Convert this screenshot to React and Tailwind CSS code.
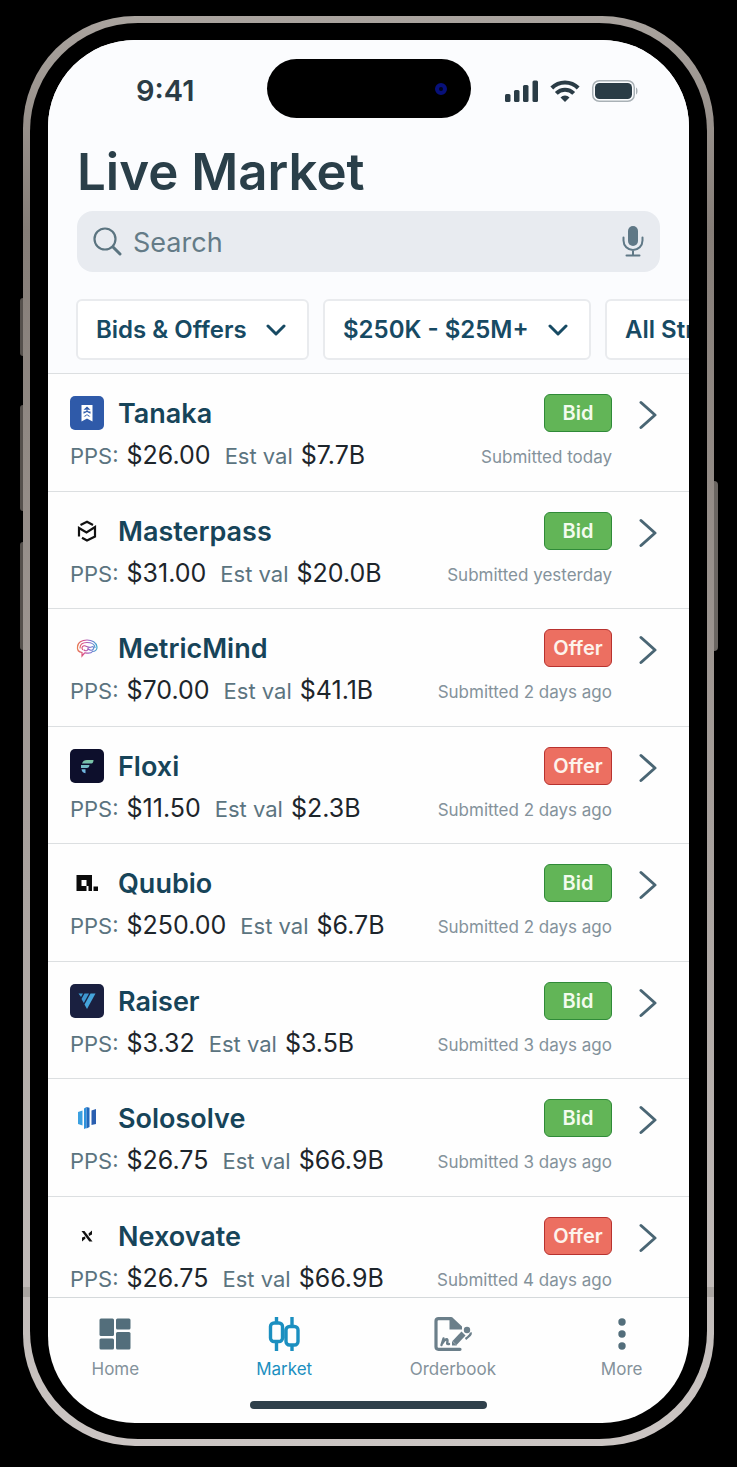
import React, { useState } from "react";

const listings = [
  { name: "Tanaka", logo: TanakaLogo, pps: "$26.00", val: "$7.7B", side: "Bid", submitted: "today" },
  { name: "Masterpass", logo: MasterpassLogo, pps: "$31.00", val: "$20.0B", side: "Bid", submitted: "yesterday" },
  { name: "MetricMind", logo: MetricMindLogo, pps: "$70.00", val: "$41.1B", side: "Offer", submitted: "2 days ago" },
  { name: "Floxi", logo: FloxiLogo, pps: "$11.50", val: "$2.3B", side: "Offer", submitted: "2 days ago" },
  { name: "Quubio", logo: QuubioLogo, pps: "$250.00", val: "$6.7B", side: "Bid", submitted: "2 days ago" },
  { name: "Raiser", logo: RaiserLogo, pps: "$3.32", val: "$3.5B", side: "Bid", submitted: "3 days ago" },
  { name: "Solosolve", logo: SolosolveLogo, pps: "$26.75", val: "$66.9B", side: "Bid", submitted: "3 days ago" },
  { name: "Nexovate", logo: NexovateLogo, pps: "$26.75", val: "$66.9B", side: "Offer", submitted: "4 days ago" },
];

const tabs = [
  { label: "Home", icon: HomeIcon },
  { label: "Market", icon: MarketIcon },
  { label: "Orderbook", icon: OrderbookIcon },
  { label: "More", icon: MoreIcon },
];

/* company logos, all on a 34px tile */

function TanakaLogo() {
  return (
    <svg viewBox="0 0 34 34" className="size-[34px]" aria-hidden="true">
      <rect width="34" height="34" rx="5" fill="#2f5aa9" />
      <path d="M11.5 9h11v16.5l-5.5-3-5.5 3z" fill="#fff" />
      <path d="M17 10.5l3.5 3.2h-7zM13.5 15.5h1.8l1.7-1.6 1.7 1.6h1.8v2.2L17 15.9l-3.5 1.8zM13.5 20.5h1.8l1.7-1.6 1.7 1.6h1.8L17 18.2z" fill="#2f5aa9" />
    </svg>
  );
}

function MasterpassLogo() {
  return (
    <svg viewBox="0 0 34 34" className="size-[34px]" fill="none" stroke="#111" strokeWidth="2.2" aria-hidden="true">
      <path d="M10.500 11L17 7.800l6 3.200" />
      <path d="M9 22.500v-8.500l7.500 4.500 8.500-5.500v9.500L17 26.500l-5-2.800" />
    </svg>
  );
}

function MetricMindLogo() {
  return (
    <svg viewBox="0 0 34 34" className="size-[34px]" fill="none" stroke="url(#mind)" strokeWidth="1.2" strokeLinecap="round" aria-hidden="true">
      <defs>
        <linearGradient id="mind" x1="7" y1="0" x2="27" y2="0" gradientUnits="userSpaceOnUse">
          <stop offset="0" stopColor="#e8804f" />
          <stop offset="0.35" stopColor="#d6498e" />
          <stop offset="0.65" stopColor="#8a6fd0" />
          <stop offset="1" stopColor="#3fa9cf" />
        </linearGradient>
      </defs>
      <path d="M12 25v-3.500c-3-.5-5-2.500-4.500-5.500C7.500 11.500 12 9 17 9s9.500 2.500 10 7c.2 3-2 4.500-4.500 4.500-2 3-6 1-8 1.500L12 25z" />
      <path d="M10 17c0-3.500 3-5.500 7-5.500s7.500 1.500 8 5M12.500 18.500c-1.500-2 .5-4.500 3-3.500s4 2 6 1 3 1 1.500 2.500-4 .5-5-1M14 19c2 1.500 4.500.5 4-2" />
    </svg>
  );
}

function FloxiLogo() {
  return (
    <svg viewBox="0 0 34 34" className="size-[34px]" aria-hidden="true">
      <defs>
        <linearGradient id="floxi" x1="0" y1="10" x2="0" y2="24" gradientUnits="userSpaceOnUse">
          <stop offset="0" stopColor="#7cc79b" />
          <stop offset="1" stopColor="#6fb4e8" />
        </linearGradient>
      </defs>
      <rect width="34" height="34" rx="5" fill="#0d0f2c" />
      <path d="M23.500 11c0 2.500-.8 3.500-3 3.500h-8.500c.8-2.500 2.500-3.500 5-3.500zM11 16h8.500c-.2 2-1 3-2.800 3H11zM11.500 20.200h4v4c-2.500-.5-3.700-1.800-4-4z" fill="url(#floxi)" />
    </svg>
  );
}

function QuubioLogo() {
  return (
    <svg viewBox="0 0 34 34" className="size-[34px]" fill="#0b0b0b" aria-hidden="true">
      <path fillRule="evenodd" d="M6.500 9H22v11h-5.500v5H6.500zM11.500 14v6h5v-6z" />
      <path d="M18.500 20H22v5h-3.500zM23.500 20.500h4.500V25h-4.500z" />
    </svg>
  );
}

function RaiserLogo() {
  return (
    <svg viewBox="0 0 34 34" className="size-[34px]" aria-hidden="true">
      <rect width="34" height="34" rx="5" fill="#1a2040" />
      <path d="M20.500 9.500h5L17 25l-2.500-4.500z" fill="#45a5dc" />
      <path d="M14.500 9.500h4.500l-5.200 9.500-2.300-4z" fill="#3e97d2" />
      <path d="M8.500 9.500h4.500l-2 3.500z" fill="#3ba0d8" />
    </svg>
  );
}

function SolosolveLogo() {
  return (
    <svg viewBox="0 0 34 34" className="size-[34px]" aria-hidden="true">
      <path d="M8 11l4.500-1.500v15L8 23z" fill="#3ba0e0" />
      <path d="M14 7.500l2.500-1.500v21L14 28z" fill="#2f92dc" />
      <path d="M16.500 6l3 .8V26l-3 1.500z" fill="#2069bd" />
      <path d="M21.500 9.500l4.500-1.500v15l-4.500 1z" fill="#2a5fb0" />
    </svg>
  );
}

function NexovateLogo() {
  return (
    <svg viewBox="0 0 34 34" className="size-[34px]" fill="#111" aria-hidden="true">
      <path d="M11.500 12h3l8 10.500h-3.200z" />
      <path d="M18.500 14.500l3.500-3v4l-3 1.500zM15.500 19.500l-3.500 3v-4l3-1z" />
    </svg>
  );
}

/* tab bar icons */

function HomeIcon() {
  return (
    <svg viewBox="0 0 32 32" className="size-8" fill="#536e7b" aria-hidden="true">
      <rect width="14.5" height="17.5" rx="1.5" x="0.5" y="0.5" />
      <rect width="14.5" height="11" rx="1.5" x="17" y="0.5" />
      <rect width="14.5" height="11" rx="1.5" x="0.5" y="20.5" />
      <rect width="14.5" height="17.5" rx="1.5" x="17" y="14" />
    </svg>
  );
}

function MarketIcon() {
  return (
    <svg viewBox="0 0 32 34" className="h-[34px] w-8" fill="none" stroke="#1b8fc0" strokeWidth="3.4" aria-hidden="true">
      <path d="M8.500 0v6M8.500 25v9M24 0v9M24 28v6" />
      <path d="M6 6h5a3.500 3.500 0 0 1 3.500 3.500v11.500a3.500 3.500 0 0 1-3.500 3.500H6A3.500 3.500 0 0 1 2.500 21V9.500A3.500 3.500 0 0 1 6 6zM21.500 9.500h5A3.500 3.500 0 0 1 30 13v11.500a3.500 3.500 0 0 1-3.500 3.500h-5a3.500 3.500 0 0 1-3.500-3.500V13a3.500 3.500 0 0 1 3.500-3.500z" />
    </svg>
  );
}

function OrderbookIcon() {
  return (
    <svg viewBox="0 0 38 34" className="h-[34px] w-[38px]" fill="none" stroke="#6b7f8a" aria-hidden="true">
      <path d="M26 32.300H4.500a2.500 2.500 0 0 1-2.500-2.500V4a2.500 2.500 0 0 1 2.500-2.300H17" strokeWidth="3.2" strokeLinecap="round" />
      <path d="M15.500 0.500h3L28 9.500v3H15.500z" fill="#6b7f8a" stroke="none" />
      <path d="M7.500 28l2-6.500M8.500 26c2.500-4 5-5 5-2.500s-1.500 4 1.500 3.500" strokeWidth="2.4" strokeLinejoin="round" strokeLinecap="round" />
      <path d="M20.500 26l9-9.500" strokeWidth="5.6" />
      <path d="M18 28.500v-4.500l5 4.500z" fill="#6b7f8a" stroke="none" />
      <circle cx="33" cy="13" r="3.2" fill="#6b7f8a" stroke="none" />
      <path d="M36.500 15.500c1 1.800-1 3.500-5 6.500" strokeWidth="2.2" />
    </svg>
  );
}

function MoreIcon() {
  return (
    <svg viewBox="0 0 32 32" className="size-8" fill="#536e7b" aria-hidden="true">
      <circle cx="16" cy="4" r="3.7" />
      <circle cx="16" cy="16" r="3.7" />
      <circle cx="16" cy="28" r="3.7" />
    </svg>
  );
}

function Chevron() {
  return (
    <svg viewBox="0 0 20 12" className="pointer-events-none absolute right-[23px] h-3 w-5" fill="none" stroke="#174a63" strokeWidth="3" strokeLinecap="round" strokeLinejoin="round" aria-hidden="true">
      <path d="M2 2l8 8 8-8" />
    </svg>
  );
}

function StatusBar() {
  return (
    <div className="grid grid-cols-[1fr_204px_1fr] items-center pt-[19px]">
      <p className="pt-1 pl-4 text-center text-[29px] leading-8 font-semibold text-[#2a3c46]">9:41</p>
      <div className="flex h-[59px] items-center justify-end rounded-full bg-black pr-6">
        <span className="size-3 rounded-full border-4 border-[#07107a] bg-[#02041c]"></span>
      </div>
      <div className="flex items-center gap-3 pt-1 pl-[34px]">
        <svg viewBox="0 0 33 22" className="h-[22px] w-[33px]" fill="#2a3c46" aria-hidden="true">
          <rect y="14" width="5.5" height="8" rx="1.5" />
          <rect x="9" y="10" width="5.5" height="12" rx="1.5" />
          <rect x="18" y="5" width="5.5" height="17" rx="1.5" />
          <rect x="27.500" y="0.5" width="5.5" height="21.5" rx="1.5" />
        </svg>
        <svg viewBox="0 0 30 22" className="h-[22px] w-[30px]" fill="none" stroke="#2a3c46" strokeWidth="4" aria-hidden="true">
          <path d="M1.800 8a18.500 18.500 0 0 1 26.400 0" />
          <path d="M6.300 13.300a12.200 12.200 0 0 1 17.400 0" />
          <path d="M15 22l-4.500-4.500a6 6 0 0 1 9 0z" fill="#2a3c46" stroke="none" />
        </svg>
        <svg viewBox="0 0 46 22" className="h-[22px] w-[46px]" aria-hidden="true">
          <rect x="0.75" y="0.75" width="41.5" height="20.5" rx="6.5" fill="none" stroke="#a9b1b6" strokeWidth="1.5" />
          <rect x="3" y="3" width="37" height="16" rx="4.5" fill="#2a3c46" />
          <path d="M44 7.500c2 .8 2 6.200 0 7z" fill="#a9b1b6" />
        </svg>
      </div>
    </div>
  );
}

function Filter({ label }) {
  return (
    <div className="relative flex shrink-0 items-center">
      <select
        aria-label={label}
        className="h-[61px] appearance-none rounded-md border-2 border-[#e9ebee] bg-white pt-px pr-[60px] pl-[18px] text-[24px] font-semibold text-[#174a63]"
      >
        <option>{label}</option>
      </select>
      <Chevron />
    </div>
  );
}

function Listing({ item }) {
  const Logo = item.logo;
  return (
    <li className="border-b border-[#dcdfe1]">
      <a href="#" className="flex items-start justify-between pt-5 pr-8 pl-[22px]">
        <div>
          <div className="flex h-[38px] items-center gap-[14px]">
            <Logo />
            <h2 className="pt-[2px] text-[27px] leading-8 font-semibold text-[#174459]">{item.name}</h2>
          </div>
          <p className="mt-[7px] flex items-baseline text-[22px] leading-8 text-[#5b7480]">
            PPS:
            <span className="ml-2 text-[25px] text-[#1d252b]">{item.pps}</span>
            <span className="ml-[14px]">Est val</span>
            <span className="ml-2 text-[25px] text-[#1d252b]">{item.val}</span>
          </p>
        </div>
        <div className="flex gap-[27px]">
          <div className="flex flex-col items-end">
            <span
              className={
                item.side === "Bid"
                  ? "flex h-[38px] w-[68px] items-center justify-center rounded-md border border-[#2f8a38] bg-[#62b557] text-[20px] font-semibold text-[#f3fbee]"
                  : "flex h-[38px] w-[68px] items-center justify-center rounded-md border border-[#b8322f] bg-[#ec6f61] text-[20px] font-semibold text-[#fdf3ec]"
              }
            >
              {item.side}
            </span>
            <span className="mt-[9px] text-[17px] leading-8 text-[#84929b]">Submitted {item.submitted}</span>
          </div>
          <svg viewBox="0 0 18 30" className="mt-[6px] h-[30px] w-[18px]" fill="none" stroke="#4a6674" strokeWidth="3" strokeLinecap="round" strokeLinejoin="round" aria-hidden="true">
            <path d="M2 2.500l14 12.500L2 27.500" />
          </svg>
        </div>
      </a>
    </li>
  );
}

const App = () => {
  const [active, setActive] = useState("Market");

  return (
    <div className="bg-black px-[23px] pt-4 pb-[21px] font-['Inter',sans-serif]">
      {/* phone body */}
      <div className="relative rounded-[112px] bg-linear-to-b from-[#aaa49f] via-[#857d77] via-15% to-[#cbc5c3] p-[7px]">
        <span className="absolute top-[282px] -left-[3px] h-[58px] w-[3px] rounded-l-sm bg-[#55504c]"></span>
        <span className="absolute top-[389px] -left-[3px] h-[106px] w-[3px] rounded-l-sm bg-[#55504c]"></span>
        <span className="absolute top-[526px] -left-[3px] h-[108px] w-[3px] rounded-l-sm bg-[#55504c]"></span>
        <span className="absolute top-[465px] -right-[4px] h-[170px] w-[4px] rounded-r-sm bg-[#6b6662]"></span>
        {/* antenna bands */}
        <span className="absolute bottom-[149px] left-0 h-[10px] w-[7px] bg-[#aaa5a1]"></span>
        <span className="absolute right-0 bottom-[149px] h-[10px] w-[7px] bg-[#aaa5a1]"></span>

        <div className="relative rounded-[108px] bg-black px-[18px] pt-[17px] pb-4">
          <div className="overflow-hidden rounded-[87px] bg-[#fefefe]">
            <header className="border-b border-[#dcdfe1] bg-[#fbfcfe]">
              <StatusBar />
              <div className="px-[29px]">
                <h1 className="mt-[22px] text-[51px] leading-[64px] font-semibold text-[#2a3f49]">Live Market</h1>
                <label className="mt-[7px] flex h-[61px] items-center rounded-2xl bg-[#e8ebf0] px-4">
                  <svg viewBox="0 0 29 29" className="size-[29px] shrink-0" fill="none" stroke="#5b7480" strokeWidth="2.2" strokeLinecap="round" aria-hidden="true">
                    <circle cx="12" cy="12" r="10.5" />
                    <path d="M20 20l7 7" strokeWidth="3" />
                  </svg>
                  <input
                    type="text"
                    placeholder="Search"
                    aria-label="Search"
                    className="ml-[11px] min-w-0 flex-1 bg-transparent pt-[3px] text-[27px] text-[#2a3f49] outline-none placeholder:text-[#647b87]"
                  />
                  <button type="button" aria-label="Voice search" className="shrink-0">
                    <svg viewBox="0 0 22 32" className="h-8 w-[22px]" fill="none" stroke="#5f7886" strokeWidth="2" strokeLinecap="round" aria-hidden="true">
                      <rect x="6" y="0" width="10" height="20" rx="5" fill="#5f7886" stroke="none" />
                      <path d="M1.500 11.500v3a9.500 9.500 0 0 0 19 0v-3M11 24v5M4.500 29.500h13" />
                    </svg>
                  </button>
                </label>
              </div>
              <div className="mt-[27px] flex gap-[14px] overflow-hidden pb-[13px] pl-7">
                <Filter label="Bids & Offers" />
                <Filter label="$250K - $25M+" />
                <Filter label="All Strategies" />
              </div>
            </header>

            <main className="max-h-[923px] overflow-hidden">
              <ul className="grid min-h-[940px] auto-rows-fr">
                {listings.map((item) => (
                  <Listing key={item.name} item={item} />
                ))}
              </ul>
            </main>

            <nav className="overflow-hidden border-t border-[#d5d9db]">
              <div className="-mx-[17px] grid grid-cols-4 pt-[19px]">
                {tabs.map(({ label, icon: Icon }) => (
                  <button
                    key={label}
                    type="button"
                    onClick={() => setActive(label)}
                    className={
                      active === label
                        ? "flex flex-col items-center text-[17px] text-[#1b8fc0]"
                        : "flex flex-col items-center text-[17px] text-[#84929b]"
                    }
                  >
                    <span className="flex h-[34px] items-center">
                      <Icon />
                    </span>
                    <span className="mt-[6px] leading-6">{label}</span>
                  </button>
                ))}
              </div>
              <div className="mx-auto mt-5 mb-[14px] h-2 w-[237px] rounded-full bg-[#2f404b]"></div>
            </nav>
          </div>
        </div>
      </div>
    </div>
  );
};

export default App;
